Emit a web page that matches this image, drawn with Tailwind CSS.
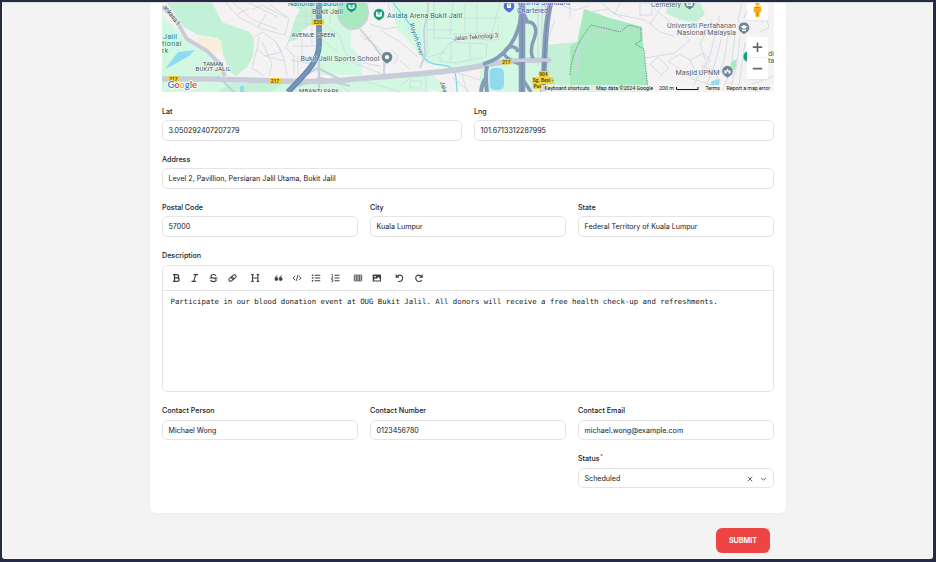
<!DOCTYPE html>
<html lang="en">
<head>
<meta charset="utf-8">
<title>Edit event</title>
<script src="https://cdn.jsdelivr.net/npm/@tailwindcss/browser@4"></script>
</head>
<body class="w-[936px] h-[562px] overflow-hidden bg-[#232c44] pt-[2px] pl-[2px] font-['Inter',sans-serif] text-[7.13px] leading-[10px] text-[#18181b]">
<div class="w-[931px] h-[557px] bg-[#f3f3f3] border border-[#fafafa] border-t-[#dcdde0] rounded-b-[3px] overflow-hidden">
<main class="ml-[147px] -mt-px w-[636px]">
<section class="h-[511px] bg-white rounded-b-[6px] px-3 shadow-[0_0_1px_0_#00000026]">
  <svg class="block w-[612px] h-[90px]" viewBox="162 2 612 90" font-family="Roboto, sans-serif">
    <rect x="162" y="2" width="612" height="90" fill="#f4f2f3"/>
    <!-- parks and green areas -->
    <path d="M162 15L175 28 188 42 207 54 225 76 162 78Z" fill="#d3f8e2"/>
    <path d="M166 2H212L222 22 250 32 254 39 253 57 247 67 236 76 230 72 222 52 218 38 198 35 184 27Z" fill="#c3f1d5"/>
    <path d="M212 2H288L290 22 285 42 254 39 250 32 222 22Z" fill="#f4f2f3"/>
    <path d="M290 2H318V20L303 30 296 40 288 42 294 22 300 10Z" fill="#c3f1d5"/>
    <path d="M320 2H370L352 30 350 45 362 58 362 75H322L310 65 318 40Z" fill="#d3f8e2"/>
    <path d="M390 2H545V92H486V76L424 62 412 45 398 30Z" fill="#d3f8e2"/>
    <path d="M395 75L450 68 490 62 545 58V92H440L415 84Z" fill="#d3f8e2"/>
    <path d="M162 81L270 84 310 82 400 78 432 92H162Z" fill="#d3f8e2"/>
    <path d="M230 83H284L270 92H218Z" fill="#c3f1d5"/>
    <path d="M432 74L480 67V92H450Z" fill="#f4f2f3"/>
    <path d="M545 45L577 42 570 92H545Z" fill="#c3f1d5"/>
    <path d="M584 9L610 18 642 27 644 55 649 92H570V46L577 42Z" fill="#a8eac0"/>
    <path d="M668 2H700L705 14 697 22 680 20 666 13Z" fill="#c3f1d5"/>
    <path d="M731 62L737 59 735 70 730 70Z" fill="#a8eac0"/>
    <ellipse cx="353" cy="12" rx="15" ry="17" fill="#a8eac0" stroke="#c6d6d4" stroke-width="2"/>
    <path d="M198 36L221 40 223 52 213 54 203 49 193 46Z" fill="#f8eedb"/>
    <!-- water -->
    <path d="M165 69L178 52 195 50 189 56 175 64Z" fill="#90dbf0"/>
    <rect x="489.500" y="68" width="14.500" height="22" rx="5" fill="#90dbf0"/>
    <path d="M712 81L720 79 719 85 710 85ZM240 86H244V92H240Z" fill="#90dbf0"/>
    <path d="M393 2C401 16 412 22 417 40 422 56 424 64 441 65S456 76 457 92" fill="none" stroke="#80d8ef" stroke-width="1.300"/>
    <!-- minor streets -->
    <g fill="none" stroke="#cdd8df" stroke-width=".8">
      <path d="M225 2L240 18 262 29 285 35 289 18 270 5M232 2L253 20 277 29M247 2L278 17M238 14L249 8M258 27L266 14M251 10L262 5 287 18M254 37L263 32 276 42 282 52 265 56 257 49 259 37M262 42L272 64 269 76M257 49L252 68 264 76M276 42L284 58 287 75M265 56L284 61M289 40L286 48 294 56V75"/>
      <path d="M300 4L318 8M296 16H318M302 24H318M306 12V30M312 5V45M294 28L305 35 318 38M292 46H316M302 40V58M291 60L312 64M298 56V75M325 25L340 36 344 50 352 62 382 74M330 5V24M322 40L338 52M360 35L378 47 386 59 384 75M380 30L400 42 418 57M370 24L385 29 397 27M391 50L398 56 394 64M400 60L410 70M363 63L380 66M364 40L372 36M405 25L415 35M388 2L391 18M362 80L400 92M330 78L350 92"/>
      <path d="M427 14V55M427 20L465 13M434 2V38M453 2L450 34 492 33 500 2M434 38L499 40 498 25M427 30H453M465 2V32M477 4V33M450 18H500M440 55L451 42 487 44 486 57 455 63 440 61ZM451 42V61M470 43V60M428 57L445 52M422 63L430 49M410 81H421V88H410ZM426 76V92M401 85L412 77M480 80L455 72M452 77L470 92M462 74L467 92"/>
      <path d="M535 10L545 14M560 5L575 10 589 6M570 2V18M590 12L608 9 622 18M601 2L615 15M620 2L615 14 645 20 660 32 674 36M640 3H652V15H640ZM654 8L690 40 675 53 645 58M650 64L658 57 669 68 661 75ZM668 61L680 54 690 60 704 53 710 60 702 72 684 72ZM690 60L697 75M665 2L650 24M712 20L700 44 705 60M720 15L710 55 692 88M724 29L713 70 704 91M729 30L724 60 712 91M735 34L731 70 722 91M740 36L737 64 730 91M745 42L738 92M700 65L712 70 735 75M690 78L714 86M742 2L738 20 745 33M750 2L744 18M763 2L769 28 760 32M752 84L774 76M555 20L548 40M548 49V92M576 47V65"/>
      <path d="M577 70C572 48 588 27 603 31L620 27 638 31M580 72C573 50 590 33 603 37M607 22L603 31M618 20L622 34M570 58L582 83"/>
    </g>
    <g fill="none" stroke="#c8d0dc" stroke-width="1.700">
      <path d="M384 74V60L373 44 360 29M428 2V10L424 30 425 55 420 68M545 5L548 18 544 40"/>
      <path d="M538 2V66M542 2V66" stroke-width="1"/>
    </g>
    <!-- main roads -->
    <path d="M162 7C178 18 180 29 187 39L207 51 220 64 225 76" fill="none" stroke="#c7ced9" stroke-width="4"/>
    <path d="M162 79H210C260 80 320 84 355 79 400 75 445 73 475 67 510 60 522 60 550 60" fill="none" stroke="#c7ced9" stroke-width="5.500"/>
    <path d="M218 76L234 92M319 50V92M290 83L318 68 345 82M298 86L320 78 350 86" fill="none" stroke="#c7ced9" stroke-width="2.300"/>
    <path d="M319 2V45C319 62 305 74 288 92" fill="none" stroke="#5e7ba4" stroke-width="5.500"/>
    <path d="M319 2V45C319 62 305 74 288 92" fill="none" stroke="#7494bc" stroke-width="3.800"/>
    <g fill="none" stroke="#879cb9">
      <path d="M522 2V92" stroke-width="6.500"/>
      <path d="M483 64C507 58 519 36 521 15" stroke-width="3.800"/>
      <path d="M487 66Q485 75 487 92M481 92Q482 82 487 77" stroke-width="4"/>
      <path d="M524 22C535 20 538 29 534 39 530 48 531 54 533 59M522 10L528 23M504 53C507 45 516 45 518 52M504 53Q504 58 522 65M520 75L531 92" stroke-width="3.500"/>
      <path d="M551 2C546 18 545 45 543 92" stroke-width="5.500"/>
    </g>
    <path d="M551 2C546 18 545 45 543 92M522 2V92" fill="none" stroke="#6e86a9" stroke-width="1"/>
    <path d="M495 63.500C510 60 522 60 549 60" fill="none" stroke="#c7ced9" stroke-width="3.500"/><circle cx="549" cy="60" r="2.500" fill="#c7ced9"/>
    <path d="M570 75Q571 50 591 25L620 32 629 25 641 28V41L635 44 644 49 648 92M782 42" fill="none" stroke="#536d65" stroke-width=".7" stroke-dasharray="1.5 1"/>
    <!-- road shields -->
    <g fill="#f5cf3c"><rect x="312" y="19" width="12" height="6" rx="1"/><rect x="168" y="76" width="11" height="5.500" rx="1"/><rect x="269" y="78" width="12" height="6" rx="1"/><rect x="501" y="59" width="11" height="5.500" rx="1"/><rect x="538.500" y="71" width="10" height="6" rx="1"/><path d="M532 77H554V84H541V89H533Z"/></g>
    <g font-size="4.800" font-weight="700" fill="#54501f" text-anchor="middle"><text x="318" y="24">E20</text><text x="173.500" y="80.500">217</text><text x="275" y="83">217</text><text x="506.500" y="63.500">217</text><text x="543.500" y="76">904</text><text x="543" y="82.300">Sg. Besi -</text><text x="537.500" y="88.300">Pus</text></g>
    <!-- place labels -->
    <g paint-order="stroke" stroke="#fff" stroke-width="1" stroke-linejoin="round" stroke-opacity=".6" font-size="7.200">
      <g fill="#13735a"><text x="288" y="6" textLength="55">National Stadium</text><text x="312" y="13.500" textLength="31">Bukit Jalil</text><text x="387" y="17.800" textLength="75">Axiata Arena Bukit Jalil</text><text x="163" y="38.500" textLength="14">Jalil</text><text x="162" y="46" textLength="19.500">tional</text><text x="162" y="53" textLength="6.500">rk</text><text x="768" y="56">di</text><text x="768" y="63">ta</text></g>
      <g fill="#4f606f"><text x="300.500" y="60.800" textLength="79">Bukit Jalil Sports School</text><text x="651" y="7" textLength="30">Cemetery</text><text x="667" y="27.500" textLength="69">Universiti Pertahanan</text><text x="677" y="34.800" textLength="59">Nasional Malaysia</text><text x="675.500" y="74.500" textLength="44">Masjid UPNM</text></g>
      <g fill="#4654b4"><text x="517" y="5.300" textLength="53">Wisma Standard</text><text x="517" y="12.500" textLength="31">Chartered</text></g>
      <g fill="#3c4651" font-size="6"><text x="291.500" y="37" textLength="43.500">AVENUE GREEN</text><text x="203" y="65.500" textLength="20">TAMAN</text><text x="195.500" y="71" textLength="35">BUKIT JALIL</text><text x="299" y="92.500" textLength="40">MBANTI PARK</text><text transform="translate(453.500 40.500) rotate(-4)" textLength="45" font-size="6.300">Jalan Teknologi 3</text><text transform="translate(163 7) rotate(53)" textLength="24" font-size="6.300">ankasa 1</text><text transform="translate(440 82) rotate(72)" font-size="6">Jala</text></g>
      <text transform="translate(409.500 24) rotate(72)" fill="#14828f" textLength="34" font-size="6.500">Kuyoh River</text>
    </g>
    <!-- place markers -->
    <g stroke="#fff" stroke-width=".6">
      <path d="M351.500 13L348.500 11A5.700 5.700 0 1 1 354.500 11Z" fill="#12a17a"/>
      <path d="M379 21L376 19A5.700 5.700 0 1 1 382 19Z" fill="#12a17a"/>
      <path d="M509 13L506 11A5.700 5.700 0 1 1 512 11Z" fill="#5b6bd4"/>
      <path d="M387 64L384 62A5.700 5.700 0 1 1 390 62Z" fill="#6e8594"/>
      <path d="M689.500 10L686.500 8A5.700 5.700 0 1 1 692.500 8Z" fill="#6e8594"/>
      <path d="M744 34.500L741 32.500A5.700 5.700 0 1 1 747 32.500Z" fill="#6e8594"/>
      <path d="M727.500 78L724.500 76A5.700 5.700 0 1 1 730.500 76Z" fill="#6e8594"/>
      <circle cx="748.500" cy="56.500" r="5.500" fill="#12a17a"/>
    </g>
    <g fill="#fff"><circle cx="387" cy="57.200" r="2.100"/><path d="M376 11.500L379 13 382 11.500V16Q379 18 376 16ZM348.500 4L351.500 6 354.500 4V8Q351.500 10 348.500 8ZM507 3.500H511V8H507ZM686.500 2H692.500V6H686.500ZM740.500 27L744 25 747.500 27 744 29ZM742 29L744 30 746 29V31H742ZM724.500 73.500V70L726 71 727.500 68.500 729 71 730.500 70V73.500H728.500V71.500H726.500V73.500Z"/></g>
    <path d="M377.500 14H380.500M350 7H353M508 5H510M688 4H691" stroke="#287c70" stroke-width=".8"/>
    <!-- map controls -->
    <g fill="#fff"><path d="M747 2H768V20.500H747Z"/><rect x="747" y="37" width="21" height="42.500" rx="1"/></g>
    <path d="M747 20.700H768M747 79.700H768" stroke="#d5d5d5" stroke-width=".6"/>
    <path d="M748 57.500H767" stroke="#e6e6e6" stroke-width=".7"/>
    <path d="M752.800 47.200H762.200M757.500 42.500V51.900M752.800 68.700H762.200" stroke="#666" stroke-width="1.700"/>
    <circle cx="757.500" cy="4" r="2.100" fill="#fbbc04"/><path d="M754 6.500H761L761.500 11.500 759.800 12.500 759.200 17H755.800L755.200 12.500 753.500 11.500Z" fill="#f6ac16"/><path d="M755.500 7.500H759.500M757.500 12V16" stroke="#c77716" stroke-width=".7"/>
    <!-- attribution -->
    <path d="M541 85H774V92H541Z" fill="#f5f5f5" fill-opacity=".72"/>
    <g fill="#111" font-size="5.300"><text x="544.500" y="90" textLength="45">Keyboard shortcuts</text><text x="596" y="90" textLength="57">Map data ©2024 Google</text><text x="659" y="90" textLength="15">200 m</text><text x="705.500" y="90" textLength="14.500">Terms</text><text x="726.500" y="90" textLength="43.500">Report a map error</text></g>
    <path d="M676.500 87V89.500H698V87" fill="none" stroke="#111" stroke-width="1"/>
    <text x="167.500" y="88" font-family="Lato, sans-serif" font-weight="700" font-size="9.500" textLength="29.500" paint-order="stroke" stroke="#fff" stroke-width="1.500"><tspan fill="#4285f4">G</tspan><tspan fill="#ea4335">o</tspan><tspan fill="#f5b400">o</tspan><tspan fill="#4285f4">g</tspan><tspan fill="#34a853">l</tspan><tspan fill="#ea4335">e</tspan></text>
  </svg>

  <div class="grid grid-cols-2 gap-x-3 pt-[15px]">
    <label class="block h-12 font-medium">Lat<span class="mt-[3px] flex h-[21px] items-center rounded-[5px] border border-[#e5e5e7] px-[5.5px] font-normal">3.050292407207279</span></label>
    <label class="block h-12 font-medium">Lng<span class="mt-[3px] flex h-[21px] items-center rounded-[5px] border border-[#e5e5e7] px-[5.5px] font-normal">101.6713312287995</span></label>
  </div>
  <label class="block h-12 font-medium">Address<span class="mt-[3px] flex h-[21px] items-center rounded-[5px] border border-[#e5e5e7] px-[5.5px] font-normal">Level 2, Pavillion, Persiaran Jalil Utama, Bukit Jalil</span></label>
  <div class="grid grid-cols-3 gap-x-3">
    <label class="block h-12 font-medium">Postal Code<span class="mt-[3px] flex h-[21px] items-center rounded-[5px] border border-[#e5e5e7] px-[5.5px] font-normal">57000</span></label>
    <label class="block h-12 font-medium">City<span class="mt-[3px] flex h-[21px] items-center rounded-[5px] border border-[#e5e5e7] px-[5.5px] font-normal">Kuala Lumpur</span></label>
    <label class="block h-12 font-medium">State<span class="mt-[3px] flex h-[21px] items-center rounded-[5px] border border-[#e5e5e7] px-[5.5px] font-normal">Federal Territory of Kuala Lumpur</span></label>
  </div>
  <div class="font-medium">Description</div>
  <div class="mt-[4px] h-[127px] rounded-[5px] border border-[#e5e5e7]">
    <svg class="block h-[25px] w-full border-b border-[#e5e5e7]" viewBox="163 266 610 24" fill="none" stroke="#3a3e46" stroke-width="1.100">
      <path d="M173 274.700H176.600Q178.600 274.700 178.600 276.300T176.600 277.900H174.200M176.600 277.900Q179.200 277.900 179.200 279.700T176.600 281.300H173M174.500 274.700V281.300" stroke-width="1.300"/>
      <path d="M193.500 274.600H198M191.500 281.400H196M196 274.600L193.500 281.400"/>
      <path d="M216 276Q215.500 274.500 213.500 274.500 211 274.500 211 276.300 211 277.500 213.500 278 216.200 278.600 216.200 280 216.200 281.600 213.600 281.600 211 281.600 210.700 279.800M209.500 278H217.500"/>
      <g transform="rotate(-38 232.500 278)" stroke-width="1"><rect x="228.300" y="276.400" width="5" height="3.200" rx="1.600"/><rect x="231.700" y="276.400" width="5" height="3.200" rx="1.600"/></g>
      <path d="M252.500 274.600V281.400M257.900 274.600V281.400M252.500 278H257.900M251.300 274.600H253.800M256.700 274.600H259.200M251.300 281.400H253.800M256.700 281.400H259.200"/>
      <path d="M277.500 275.500Q274.800 276.500 274.800 279A1.600 1.600 0 1 0 276 277.500Q276 276.500 277.500 275.500ZM281.800 275.500Q279.100 276.500 279.100 279A1.600 1.600 0 1 0 280.300 277.500Q280.300 276.500 281.800 275.500Z" fill="#3a3e46" stroke-width=".5"/>
      <path d="M295.200 275.800L293 278 295.200 280.200M299 275.800L301.200 278 299 280.200M298 275L296.200 281" stroke-width=".9"/>
      <path d="M314.700 275.200H320.300M314.700 278H320.300M314.700 280.800H320.300"/><path d="M311.800 275.200H313.300M311.800 278H313.300M311.800 280.800H313.300" stroke-width="1.500"/>
      <path d="M334.500 275.200H339.500M334.500 278H339.500M334.500 280.800H339.500"/><path d="M331.500 274.500H332.500V276.700M331.300 277.300H332.800L331.500 278.900H333M331.300 279.700H332.800V281.700H331.300M332 280.700H332.800" stroke-width=".7"/>
      <path d="M354.300 275.100H361.700V280.900H354.300ZM354.300 277H361.700M354.300 279H361.700M356.800 275V281M359.300 275V281" stroke-width=".8"/>
      <rect x="372.700" y="274.500" width="8.300" height="7.100" rx=".7" fill="#3a3e46" stroke="none"/><circle cx="375" cy="276.600" r=".8" fill="#fff" stroke="none"/><path d="M374 280.400V279.500L375.500 278.200 376.500 279 378.300 276.900 379.900 278.800V280.400Z" fill="#fff" stroke="none"/>
      <path d="M396.200 274.500V277.300H399M396.400 277.100Q399 274 401.600 275.700C403.700 277.500 402.700 281.500 399.200 281.500H398"/>
      <path d="M422.200 274.500V277.300H419.400M422 277.100Q419.400 274 416.800 275.700C414.700 277.500 415.700 281.500 419.200 281.500 420.500 281.500 421.400 280.800 421.900 280.100"/>
    </svg>
    <p class="pl-[7.500px] pt-[6px] whitespace-nowrap font-['DejaVu_Sans_Mono',monospace] text-[7.330px]">Participate in our blood donation event at OUG Bukit Jalil. All donors will receive a free health check-up and refreshments.</p>
  </div>
  <div class="mt-[14px] grid grid-cols-3 gap-x-3">
    <label class="block h-12 font-medium">Contact Person<span class="mt-[4px] flex h-[20px] items-center rounded-[5px] border border-[#e5e5e7] px-[5.5px] pt-px font-normal">Michael Wong</span></label>
    <label class="block h-12 font-medium">Contact Number<span class="mt-[4px] flex h-[20px] items-center rounded-[5px] border border-[#e5e5e7] px-[5.5px] pt-px font-normal">0123456780</span></label>
    <label class="block h-12 font-medium">Contact Email<span class="mt-[4px] flex h-[20px] items-center rounded-[5px] border border-[#e5e5e7] px-[5.5px] pt-px font-normal">michael.wong@example.com</span></label>
    <div class="col-start-3 h-12 font-medium"><div class="flex h-[10px]">Status<span class="-mt-[2px] ml-[.5px] text-[5px] leading-[8px] text-red-600">*</span></div>
      <div class="mt-[4px] flex h-[20px] items-center rounded-[5px] border border-[#e5e5e7] pl-[5.500px] pr-[6px] pt-px font-normal"><span class="grow">Scheduled</span>
        <svg class="mr-[7px] size-[6px]" viewBox="0 0 6 6" fill="none" stroke="#55585f" stroke-width=".9"><path d="M.7.7 5.300 5.300M5.300.7.7 5.300"/></svg>
        <svg class="h-[6px] w-[7px]" viewBox="0 0 7 6" fill="none" stroke="#55585f" stroke-width=".9"><path d="M1.200 2 3.500 4.300 5.800 2"/></svg>
      </div>
    </div>
  </div>
</section>
<div class="flex justify-end pr-4 pt-[15px]"><button class="h-[25px] w-[54px] rounded-[6px] bg-[#ef4444] pt-px text-[7.200px] font-bold text-white">SUBMIT</button></div>
</main>
</div>
</body>
</html>
